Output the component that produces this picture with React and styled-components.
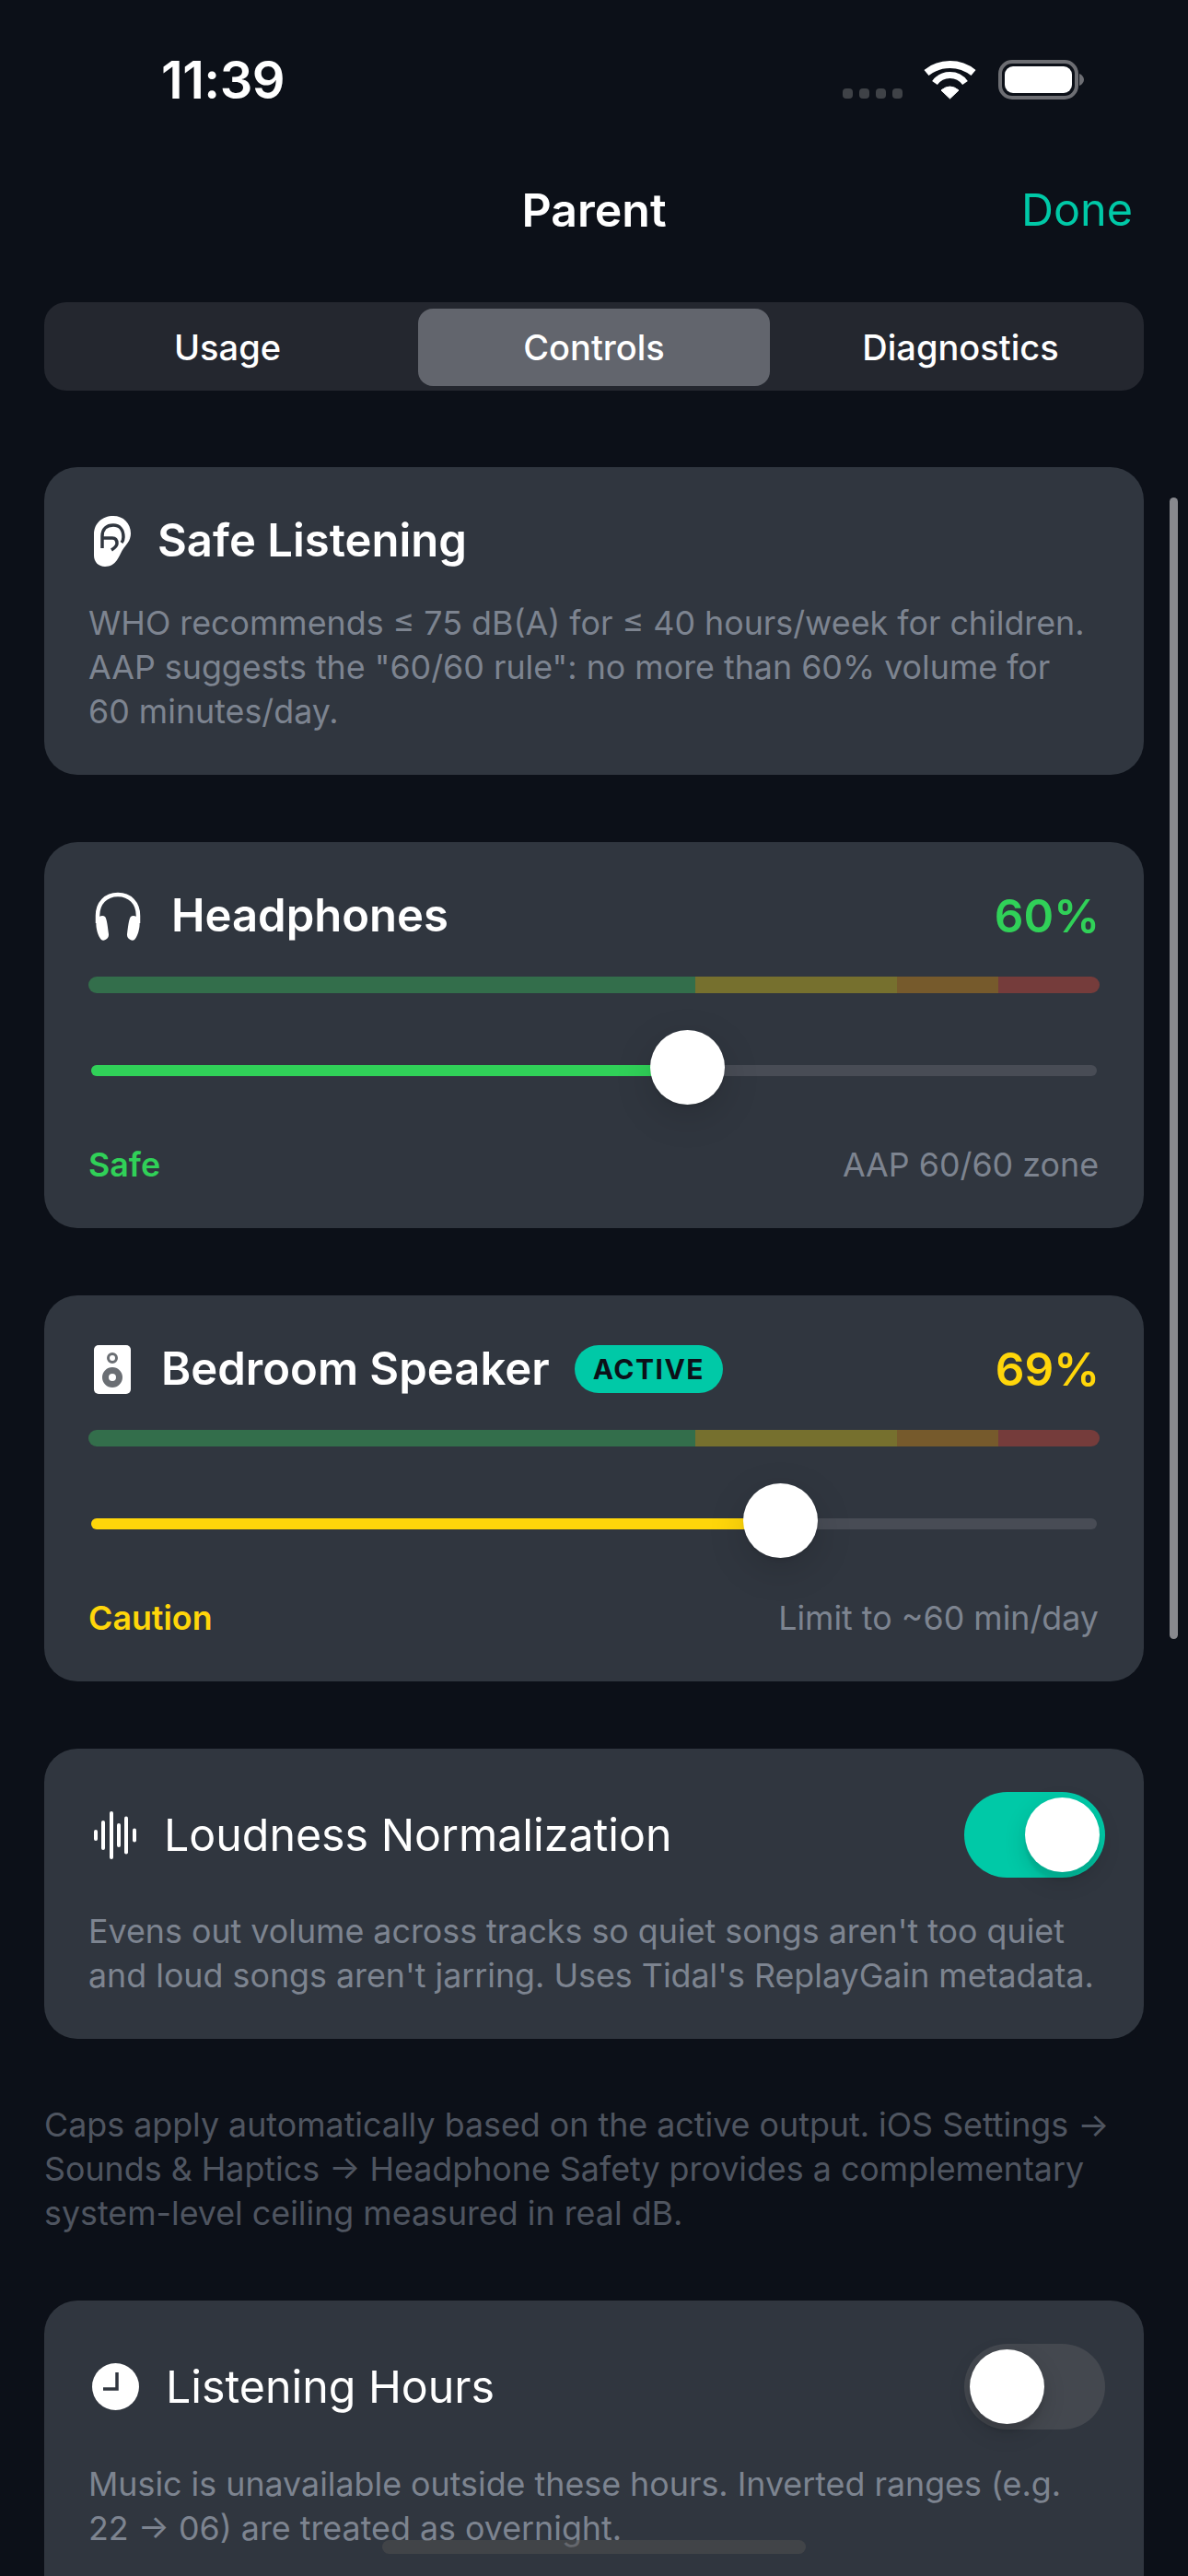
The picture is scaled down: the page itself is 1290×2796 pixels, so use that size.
import React from 'react';
import styled, { createGlobalStyle } from 'styled-components';

const GlobalStyle = createGlobalStyle`
  html, body {
    margin: 0;
    padding: 0;
    background: #0c1018;
  }
  * {
    box-sizing: border-box;
  }
`;

const Screen = styled.div`
  position: relative;
  width: 1290px;
  height: 2796px;
  overflow: hidden;
  background: #0c1018;
  color: #fff;
  font-family: Inter, "Liberation Sans", sans-serif;
`;

const StatusBar = styled.div`
  height: 150px;
  padding: 60px 113px 0 175px;
  display: flex;
  justify-content: space-between;
  align-items: flex-start;
`;

const Clock = styled.div`
  font-size: 56px;
  line-height: 54px;
  font-weight: 600;
  letter-spacing: -0.5px;
`;

const StatusIcons = styled.div`
  display: flex;
  align-items: flex-end;
  gap: 23px;
  padding-top: 5px;
`;

const SignalDots = styled.div`
  display: flex;
  gap: 7px;
  margin-bottom: 1px;
  span {
    width: 11px;
    height: 11px;
    border-radius: 4px;
    background: #3f4247;
  }
`;

const NavBar = styled.div`
  position: relative;
  height: 178px;
  padding: 45px 60px 0;
  display: flex;
  justify-content: center;
`;

const NavTitle = styled.div`
  font-size: 50px;
  line-height: 66px;
  font-weight: 600;
`;

const DoneButton = styled.div`
  position: absolute;
  right: 60px;
  top: 45px;
  font-size: 48.5px;
  line-height: 66px;
  color: #00c9a7;
`;

const Segmented = styled.div`
  margin: 0 48px;
  height: 96px;
  border-radius: 24px;
  background: #24272f;
  display: grid;
  grid-template-columns: repeat(3, 1fr);
`;

const Segment = styled.div`
  margin: 7px 8px 5px;
  border-radius: 16px;
  display: flex;
  align-items: center;
  justify-content: center;
  font-size: 38px;
  font-weight: 500;
  background: ${(p) => (p.$active ? '#62656d' : 'transparent')};
`;

const Content = styled.div`
  padding: 83px 48px 0;
  display: flex;
  flex-direction: column;
  gap: 73px;
`;

const Card = styled.div`
  border-radius: 36px;
  background: #30363f;
  padding: 48px 48px 45px;
  min-height: ${(p) => p.$height || 0}px;
`;

const ToggleCard = styled(Card)`
  padding-top: 47px;
`;

const CardHeader = styled.div`
  display: flex;
  align-items: center;
  height: 64px;
  padding-left: 6px;
  gap: ${(p) => p.$gap || 30}px;
`;

const ToggleHeader = styled(CardHeader)`
  height: 93px;
  padding-left: ${(p) => p.$inset ?? 6}px;
`;

const CardTitle = styled.div`
  font-size: 49px;
  line-height: 64px;
  font-weight: 600;
`;

const ToggleTitle = styled.div`
  font-size: 48.3px;
  line-height: 64px;
  font-weight: 400;
`;

const Percent = styled.div`
  margin-left: auto;
  font-size: 49.6px;
  line-height: 64px;
  font-weight: 600;
  color: ${(p) => p.$color};
`;

const Badge = styled.div`
  margin-left: -6px;
  height: 52px;
  padding: 0 20px;
  border-radius: 26px;
  background: #00c9a7;
  color: #0c1018;
  display: flex;
  align-items: center;
  font-size: 30px;
  font-weight: 700;
  letter-spacing: 1.5px;
`;

const BodyText = styled.p`
  margin: ${(p) => p.$top || 33}px 0 0;
  font-size: 35.8px;
  line-height: 48px;
  color: #7d8490;
`;

const ZoneBar = styled.div`
  margin-top: 34px;
  height: 18px;
  border-radius: 9px;
  overflow: hidden;
  display: grid;
  grid-template-columns: 60fr 20fr 10fr 10fr;
`;

const Zone = styled.div`
  background: ${(p) => p.$color};
`;

const Slider = styled.div`
  position: relative;
  margin: 40px 3px 0;
  height: 81px;
`;

const Track = styled.div`
  position: absolute;
  left: 0;
  right: 0;
  top: 38px;
  height: 12px;
  border-radius: 6px;
  background: #484c55;
`;

const TrackFill = styled.div`
  height: 100%;
  border-radius: 6px;
  background: ${(p) => p.$color};
`;

const Thumb = styled.div`
  position: absolute;
  top: 0;
  width: 81px;
  height: 81px;
  border-radius: 50%;
  background: #fff;
  box-shadow: 0 12px 40px rgba(0, 0, 0, 0.15), 0 3px 3px rgba(0, 0, 0, 0.06);
`;

const SliderLabels = styled.div`
  margin-top: 41px;
  padding-right: 1px;
  display: flex;
  justify-content: space-between;
  align-items: center;
  height: 48px;
  font-size: 35.8px;
  color: #7d8490;
`;

const ZoneLabel = styled.span`
  font-weight: 600;
  color: ${(p) => p.$color};
`;

const Toggle = styled.div`
  margin-left: auto;
  margin-right: -6px;
  width: 153px;
  height: 93px;
  flex: none;
  border-radius: 47px;
  padding: 6px;
  display: flex;
  justify-content: ${(p) => (p.$on ? 'flex-end' : 'flex-start')};
  background: ${(p) => (p.$on ? '#00c9a7' : '#44484f')};
`;

const ToggleKnob = styled.div`
  width: 81px;
  height: 81px;
  border-radius: 50%;
  background: #fff;
  box-shadow: 0 9px 24px rgba(0, 0, 0, 0.15), 0 9px 3px rgba(0, 0, 0, 0.06);
`;

const FooterNote = styled.p`
  margin: -4px 0 -2px;
  font-size: 35.8px;
  line-height: 48px;
  color: #4f5560;
`;

const ScrollThumb = styled.div`
  position: absolute;
  left: 1270px;
  top: 540px;
  width: 9px;
  height: 1239px;
  border-radius: 5px;
  background: #88898e;
`;

const HomeIndicator = styled.div`
  position: absolute;
  left: 415px;
  top: 2757px;
  width: 460px;
  height: 15px;
  border-radius: 8px;
  background: rgba(80, 80, 80, 0.55);
`;

const Icon = styled.svg`
  display: block;
  flex: none;
`;

const WifiIcon = () => (
  <Icon width="58" height="43" viewBox="0 0 58 43">
    <path d="M19 33 Q28.5 25 38 33 L28.5 42 Z" fill="#fff" stroke="#fff" strokeWidth="1" strokeLinejoin="round" />
    <path d="M12 25 A20.3 20.3 0 0 1 45 25" fill="none" stroke="#fff" strokeWidth="7" />
    <path d="M3 14 A40.6 40.6 0 0 1 54 14" fill="none" stroke="#fff" strokeWidth="8" />
  </Icon>
);

const BatteryIcon = () => (
  <Icon width="93" height="43" viewBox="0 0 93 43">
    <rect x="2" y="2" width="83" height="39" rx="13" fill="none" stroke="#6d6e73" strokeWidth="4" />
    <rect x="7" y="7" width="73" height="29" rx="9" fill="#fff" />
    <path d="M88 15 C91 16 93 19 93 21.5 C93 24 91 27 88 28 Z" fill="#6d6e73" />
  </Icon>
);

const EarIcon = () => (
  <Icon width="40" height="55" viewBox="0 0 40 55">
    <path d="M21 0 C32 0 40 8 40 19 C40 27 35 31 31 37 C27 44 24 55 12 55 C5 55 0 50 0 43 L0 20 C0 8 9 0 21 0 Z" fill="#fff" />
    <path d="M9 35 V22 C9 14 14 10 21 10 C28 10 32 15 32 23 C32 25 31.5 27 30 29" fill="none" stroke="#30363f" strokeWidth="3.5" />
    <path d="M9 24 H20 C24 24 25 27 25 30 C25 33 22 35 19 37" fill="none" stroke="#30363f" strokeWidth="3.5" />
  </Icon>
);

const HeadphonesIcon = () => (
  <Icon width="52" height="53" viewBox="0 0 52 53">
    <path d="M4 34 V26 C4 12 13 3 26 3 C39 3 48 12 48 26 V34" fill="none" stroke="#fff" strokeWidth="4.5" />
    <path d="M3 30 C5 26 10 25 12 27 C14 29 15 38 16 46 C16.5 51 11 54 8 52 C4 48 1 36 3 30 Z" fill="#fff" />
    <path d="M49 30 C47 26 42 25 40 27 C38 29 37 38 36 46 C35.5 51 41 54 44 52 C48 48 51 36 49 30 Z" fill="#fff" />
  </Icon>
);

const SpeakerIcon = () => (
  <Icon width="40" height="53" viewBox="0 0 40 53">
    <rect width="40" height="53" rx="5" fill="#fff" />
    <circle cx="20" cy="14" r="4.5" fill="none" stroke="#6a6e73" strokeWidth="3" />
    <circle cx="20" cy="35" r="7.5" fill="none" stroke="#6a6e73" strokeWidth="7" />
  </Icon>
);

const WAVE_BARS = [
  [2, 12],
  [10, 32],
  [19, 52],
  [27, 26],
  [35, 41],
  [44, 15],
];

const WaveIcon = () => (
  <Icon width="46" height="52" viewBox="0 0 46 52">
    {WAVE_BARS.map(([x, h]) => (
      <rect key={x} x={x - 2} y={26 - h / 2} width="4" height={h} rx="2" fill="#fff" />
    ))}
  </Icon>
);

const ClockIcon = () => (
  <Icon width="51" height="51" viewBox="0 0 51 51">
    <circle cx="25.5" cy="25.5" r="25.5" fill="#fff" />
    <path d="M27 10 V28 H12" fill="none" stroke="#30363f" strokeWidth="3.5" />
  </Icon>
);

const ZONES = [
  { color: '#336e4b' },
  { color: '#76702e' },
  { color: '#765a2c' },
  { color: '#753c3b' },
];

const THUMB = 81;

function OutputCard({ icon, name, gap, badge, percent, position, color, zone, hint }) {
  return (
    <Card>
      <CardHeader $gap={gap}>
        {icon}
        <CardTitle>{name}</CardTitle>
        {badge && <Badge>{badge}</Badge>}
        <Percent $color={color}>{percent}%</Percent>
      </CardHeader>
      <ZoneBar>
        {ZONES.map((z) => (
          <Zone key={z.color} $color={z.color} />
        ))}
      </ZoneBar>
      <Slider>
        <Track>
          <TrackFill $color={color} style={{ width: `${position * 100}%` }} />
        </Track>
        <Thumb style={{ left: `calc((100% - ${THUMB}px) * ${position})` }} />
      </Slider>
      <SliderLabels>
        <ZoneLabel $color={color}>{zone}</ZoneLabel>
        <span>{hint}</span>
      </SliderLabels>
    </Card>
  );
}

export default function App() {
  return (
    <Screen>
      <GlobalStyle />
      <StatusBar>
        <Clock>11:39</Clock>
        <StatusIcons>
          <SignalDots>
            <span />
            <span />
            <span />
            <span />
          </SignalDots>
          <WifiIcon />
          <BatteryIcon />
        </StatusIcons>
      </StatusBar>
      <NavBar>
        <NavTitle>Parent</NavTitle>
        <DoneButton>Done</DoneButton>
      </NavBar>
      <Segmented>
        <Segment>Usage</Segment>
        <Segment $active>Controls</Segment>
        <Segment>Diagnostics</Segment>
      </Segmented>
      <Content>
        <Card>
          <CardHeader $gap={29}>
            <EarIcon />
            <CardTitle>Safe Listening</CardTitle>
          </CardHeader>
          <BodyText>
            WHO recommends ≤ 75 dB(A) for ≤ 40 hours/week for children.
            <br />
            AAP suggests the "60/60 rule": no more than 60% volume for
            <br />
            60 minutes/day.
          </BodyText>
        </Card>
        <OutputCard
          icon={<HeadphonesIcon />}
          name="Headphones"
          gap={32}
          percent={60}
          position={0.6}
          color="#30d158"
          zone="Safe"
          hint="AAP 60/60 zone"
        />
        <OutputCard
          icon={<SpeakerIcon />}
          name="Bedroom Speaker"
          gap={33}
          badge="ACTIVE"
          percent={69}
          position={0.7}
          color="#ffd60a"
          zone="Caution"
          hint="Limit to ~60 min/day"
        />
        <ToggleCard>
          <ToggleHeader $gap={30}>
            <WaveIcon />
            <ToggleTitle>Loudness Normalization</ToggleTitle>
            <Toggle $on>
              <ToggleKnob />
            </Toggle>
          </ToggleHeader>
          <BodyText $top={34}>
            Evens out volume across tracks so quiet songs aren't too quiet
            <br />
            and loud songs aren't jarring. Uses Tidal's ReplayGain metadata.
          </BodyText>
        </ToggleCard>
        <FooterNote>
          Caps apply automatically based on the active output. iOS Settings →
          <br />
          Sounds &amp; Haptics → Headphone Safety provides a complementary
          <br />
          system-level ceiling measured in real dB.
        </FooterNote>
        <ToggleCard $height={400}>
          <ToggleHeader $gap={29} $inset={4}>
            <ClockIcon />
            <ToggleTitle>Listening Hours</ToggleTitle>
            <Toggle>
              <ToggleKnob />
            </Toggle>
          </ToggleHeader>
          <BodyText $top={35}>
            Music is unavailable outside these hours. Inverted ranges (e.g.
            <br />
            22 → 06) are treated as overnight.
          </BodyText>
        </ToggleCard>
      </Content>
      <ScrollThumb />
      <HomeIndicator />
    </Screen>
  );
}
